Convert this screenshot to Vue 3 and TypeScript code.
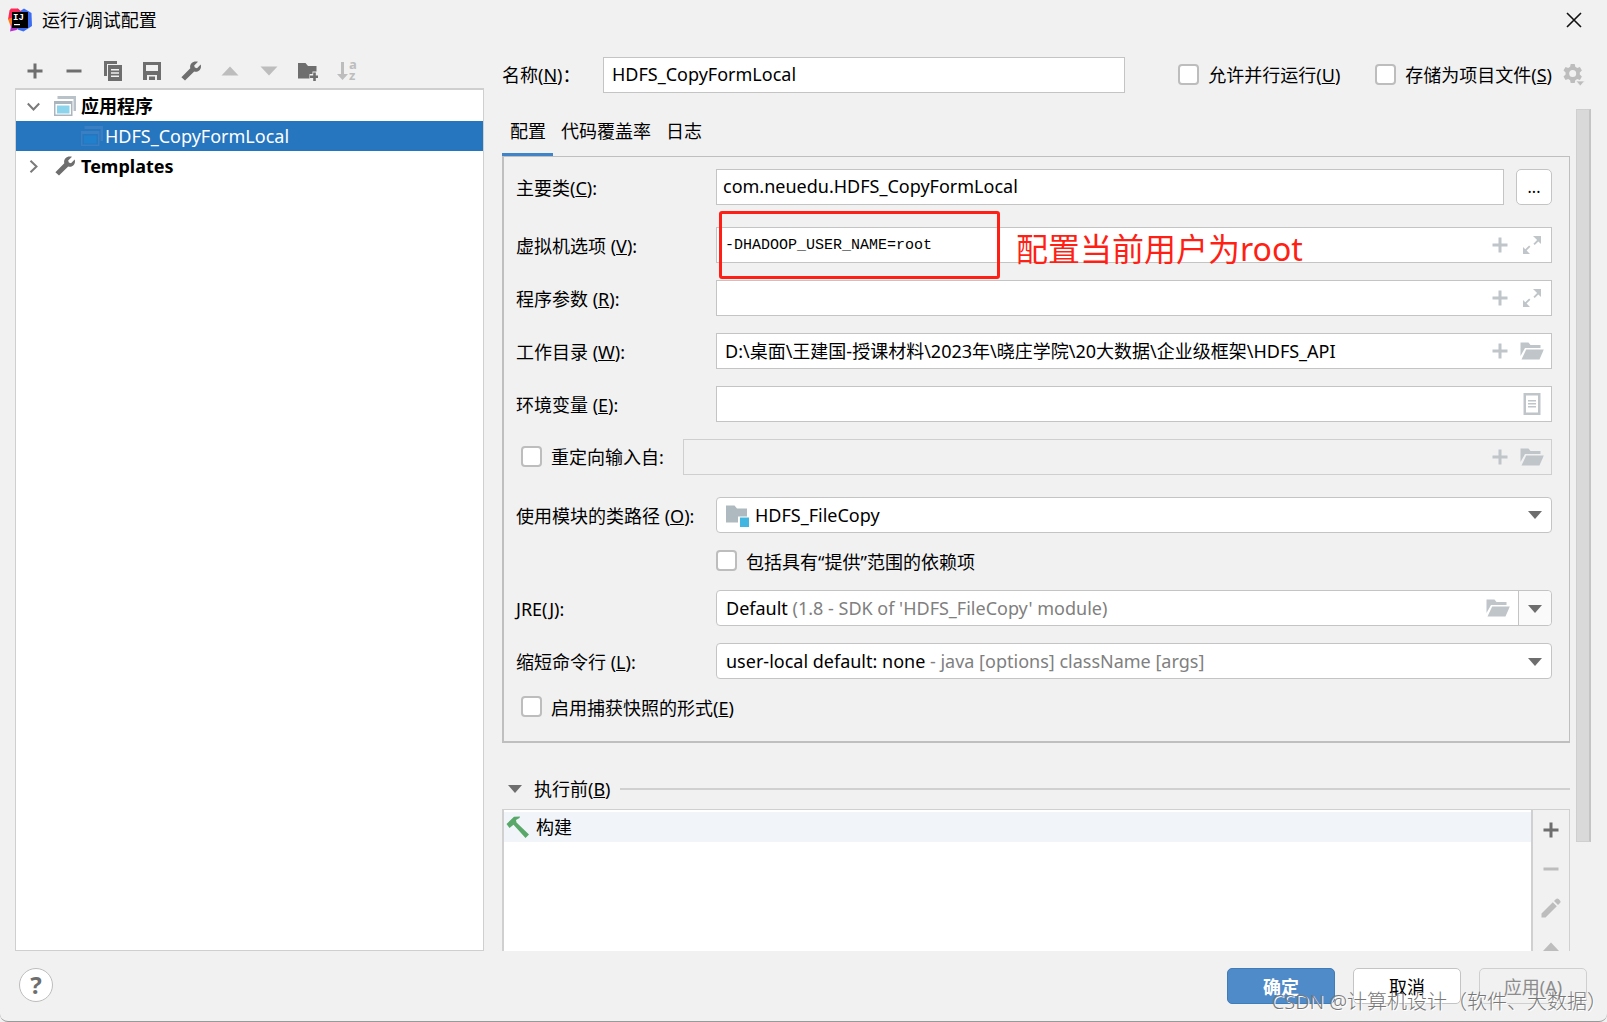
<script setup lang="ts">
import { ref } from 'vue'

interface Tool { icon: string; label: string; off?: boolean }

const tools: Tool[] = [
  { icon: 'plus', label: '添加' },
  { icon: 'minus', label: '移除' },
  { icon: 'copy', label: '复制' },
  { icon: 'save', label: '保存' },
  { icon: 'wrench', label: '编辑模板' },
  { icon: 'up', label: '上移', off: true },
  { icon: 'down', label: '下移', off: true },
  { icon: 'folder-add', label: '新建文件夹' },
]
const sideTools: Tool[] = [
  { icon: 'plus', label: '添加' },
  { icon: 'minus', label: '移除', off: true },
  { icon: 'pencil', label: '编辑', off: true },
  { icon: 'up', label: '上移', off: true },
]
const tabs = ['配置', '代码覆盖率', '日志']

const activeTab = ref(0)
const name = ref('HDFS_CopyFormLocal')
const mainClass = ref('com.neuedu.HDFS_CopyFormLocal')
const vmOptions = ref('-DHADOOP_USER_NAME=root')
const programArgs = ref('')
const workDir = ref('D:\\桌面\\王建国-授课材料\\2023年\\晓庄学院\\20大数据\\企业级框架\\HDFS_API')
const envVars = ref('')
</script>

<template>
  <svg class="defs" aria-hidden="true">
    <symbol id="i-plus" viewBox="0 0 20 20"><path d="M8.500 2.500h3v6h6v3h-6v6h-3v-6h-6v-3h6z" fill="currentColor" /></symbol>
    <symbol id="i-minus" viewBox="0 0 20 20"><path d="M2.500 8.500h15v3h-15z" fill="currentColor" /></symbol>
    <symbol id="i-copy" viewBox="0 0 20 20">
      <path d="M1 0h13v3H4v12H1z" fill="currentColor" />
      <path d="M5 4h14v16H5zM8 8v1.500h8V8zM8 11.300v1.500h8v-1.500zM8 14.600v1.500h8v-1.500z" fill="currentColor" fill-rule="evenodd" />
    </symbol>
    <symbol id="i-save" viewBox="0 0 20 20"><path d="M1 1h18v18H1zM4 4v6h12V4zM5 14v5h2v-3.500h6V19h2v-5z" fill="currentColor" fill-rule="evenodd" /></symbol>
    <symbol id="i-wrench" viewBox="0 0 20 20"><path d="M17 .8l-3.800 3.700.6 2 2.200.7 3.700-3.600c.7 2.300 0 4.500-1.500 5.800-1.400 1.300-3.300 1.600-5 1.100L4 19.600.4 16.300 9.300 7.200c-.5-1.700-.1-3.700 1.200-5C12 .6 14.600-.1 17 .8z" fill="currentColor" /></symbol>
    <symbol id="i-up" viewBox="0 0 20 20"><path d="M10 5.500l8.500 9h-17z" fill="currentColor" /></symbol>
    <symbol id="i-down" viewBox="0 0 20 20"><path d="M10 14.500l8.500-9h-17z" fill="currentColor" /></symbol>
    <symbol id="i-folder-add" viewBox="0 0 20 20">
      <path d="M0 2h7.500l2.500 3h8.500v5.500h-4v2.500h-3v4.500H0z" fill="currentColor" />
      <path d="M15.200 11.500h2.600v3H21v2.600h-3.200v3h-2.600v-3H12v-2.600h3.200z" fill="currentColor" />
    </symbol>
    <symbol id="i-pencil" viewBox="0 0 20 20"><path d="M.5 15.500L11.800 4.200l4 4L4.500 19.500h-4zM13 3l2-2c.8-.8 1.800-.8 2.600 0l1.400 1.400c.8.800.8 1.800 0 2.600l-2 2z" fill="currentColor" /></symbol>
    <symbol id="i-app" viewBox="0 0 22 20">
      <path d="M3.500 0H22v15h-2.500V3h-16z" fill="#b9c2c9" />
      <path d="M0 5h18.500v15H0z" fill="#aab5bd" />
      <path d="M1.500 8H17V18.500H1.500z" fill="#fff" />
      <path d="M3 9.500h12.500v8H3z" fill="#8cd3ec" />
    </symbol>
    <symbol id="i-app-on" viewBox="0 0 22 20">
      <path d="M3.500 0H22v15h-2.500V3h-16z" fill="#3a7fc1" />
      <path d="M0 5h18.500v15H0z" fill="#3a7fc1" />
      <path d="M1.500 8H17V18.500H1.500z" fill="#2675bf" />
      <path d="M3 9.500h12.500v8H3z" fill="#2080cb" />
    </symbol>
    <symbol id="i-expand" viewBox="0 0 20 20">
      <path d="M11 1h8v8l-2.600-2.600-3.700 3.600-1.300-1.300 3.700-3.600zM1 19v-7l2.300 2.300 3.800-3.800 1.300 1.300-3.800 3.800L8 19z" fill="currentColor" />
    </symbol>
    <symbol id="i-folder" viewBox="0 0 24 20">
      <path d="M.5 1.500h8l2 2.500h10v3H5L.5 15z" fill="currentColor" />
      <path d="M6.200 8.500H23.800L19.500 18.500H1.500z" fill="currentColor" />
    </symbol>
    <symbol id="i-doc" viewBox="0 0 18 22">
      <path d="M.5 0h17v22H.5zM3 2.500v17h12v-17zM5 7h8v1.400H5zM5 10h8v1.400H5zM5 13h8v1.400H5z" fill="currentColor" fill-rule="evenodd" />
    </symbol>
    <symbol id="i-gear" viewBox="0 0 22 22">
      <path d="M7.700 0h4l.6 2.800 1.900 1.100 2.700-.9 2 3.500-2.100 1.900v2.200l2.100 1.900-2 3.500-2.700-.9-1.900 1.100-.6 2.800h-4l-.6-2.800-1.900-1.100-2.700.9-2-3.500 2.100-1.900V8.400L.5 6.500l2-3.500 2.700.9 1.900-1.100zM9.700 6a3.500 3.500 0 1 0 0 7 3.500 3.500 0 0 0 0-7z" fill="currentColor" fill-rule="evenodd" />
      <path d="M13 17h8.500l-4.200 5z" fill="currentColor" stroke="#f1f1f1" stroke-width=".7" />
    </symbol>
    <symbol id="i-arrow" viewBox="0 0 14 8"><path d="M0 0h14L7 8z" fill="currentColor" /></symbol>
  </svg>

  <main class="window">
    <header class="titlebar">
      <svg class="logo" viewBox="0 0 24 24" aria-hidden="true">
        <path d="M1.500 2.500L3 .5h7l4 4-2 8-12-1z" fill="#fe2857" />
        <path d="M0 11l6-2 4 8-7 2.500z" fill="#fc801d" />
        <path d="M2 23.500l1.500-8 9 2-4 4.500z" fill="#b232c8" />
        <path d="M16 .5l7.500 4.500L24 18l-8.500 5.500-6-2 2-18z" fill="#3c6df0" />
        <path d="M9 .5l3 2 4 3-6 2z" fill="#e0306e" />
        <rect x="4" y="4" width="16" height="16" />
        <text x="5" y="12" class="logo-text">IJ</text>
        <path d="M6 16h6v1.200H6z" fill="#fff" />
      </svg>
      <h1>运行/调试配置</h1>
      <button class="plain close" aria-label="关闭">
        <svg width="16" height="16" viewBox="0 0 16 16"><path d="M1 1l14 14M15 1L1 15" stroke="#111" stroke-width="1.600" /></svg>
      </button>
    </header>

    <div class="body">
      <aside class="left">
        <div class="toolbar">
          <button v-for="t in tools" :key="t.icon" class="plain tool" :class="{ off: t.off }" :aria-label="t.label">
            <svg class="i20"><use :href="'#i-' + t.icon" /></svg>
          </button>
          <button class="plain tool off" aria-label="排序">
            <svg class="i20" viewBox="0 0 20 20">
              <path d="M4 1h3v12h4l-5.500 6L0 13h4z" fill="currentColor" />
              <text x="12" y="8" class="glyph">a</text>
              <text x="12" y="19" class="glyph">z</text>
            </svg>
          </button>
        </div>
        <ul class="tree">
          <li class="node">
            <svg class="chev" viewBox="0 0 13 13"><path d="M.8 3.500l5.700 6 5.700-6" /></svg>
            <svg class="kind"><use href="#i-app" /></svg>
            <b>应用程序</b>
          </li>
          <li class="node child">
            <svg class="kind"><use href="#i-app-on" /></svg>
            <span>HDFS_CopyFormLocal</span>
          </li>
          <li class="node">
            <svg class="chev" viewBox="0 0 13 13"><path d="M3.500.8l6 5.700-6 5.700" /></svg>
            <svg class="kind dark"><use href="#i-wrench" /></svg>
            <b>Templates</b>
          </li>
        </ul>
      </aside>

      <section class="right">
        <div class="head">
          <label for="name" class="name-label">名称(<u>N</u>)：</label>
          <input id="name" v-model="name" type="text" class="box name" />
          <label class="check"><input type="checkbox" />允许并行运行(<u>U</u>)</label>
          <label class="check second"><input type="checkbox" />存储为项目文件(<u>S</u>)</label>
          <button class="plain gear" aria-label="设置"><svg width="22" height="22"><use href="#i-gear" /></svg></button>
        </div>

        <div class="viewport">
          <div class="content">
            <nav class="tabs">
              <button v-for="(t, i) in tabs" :key="t" class="plain tab" :class="{ on: i === activeTab }" @click="activeTab = i">{{ t }}</button>
            </nav>

            <div class="panel">
              <div class="group">
                <div class="row">
                  <label for="main" class="lab">主要类(<u>C</u>):</label>
                  <input id="main" v-model="mainClass" type="text" class="box fill" />
                  <button class="more">...</button>
                </div>
              </div>

              <div class="group">
                <div class="row">
                  <label for="vm" class="lab">虚拟机选项 (<u>V</u>):</label>
                  <div class="field">
                    <input id="vm" v-model="vmOptions" type="text" class="box mono" />
                    <span class="acts">
                      <svg class="i20"><use href="#i-plus" /></svg>
                      <svg class="act"><use href="#i-expand" /></svg>
                    </span>
                    <span class="frame"></span>
                    <span class="note">配置当前用户为root</span>
                  </div>
                </div>
                <div class="row">
                  <label for="args" class="lab">程序参数 (<u>R</u>):</label>
                  <div class="field">
                    <input id="args" v-model="programArgs" type="text" class="box" />
                    <span class="acts">
                      <svg class="i20"><use href="#i-plus" /></svg>
                      <svg class="act"><use href="#i-expand" /></svg>
                    </span>
                  </div>
                </div>
                <div class="row">
                  <label for="dir" class="lab">工作目录 (<u>W</u>):</label>
                  <div class="field">
                    <input id="dir" v-model="workDir" type="text" class="box" />
                    <span class="acts">
                      <svg class="i20"><use href="#i-plus" /></svg>
                      <svg class="act"><use href="#i-folder" /></svg>
                    </span>
                  </div>
                </div>
                <div class="row">
                  <label for="env" class="lab">环境变量 (<u>E</u>):</label>
                  <div class="field">
                    <input id="env" v-model="envVars" type="text" class="box" />
                    <span class="acts"><svg class="act doc"><use href="#i-doc" /></svg></span>
                  </div>
                </div>
                <div class="row">
                  <label class="check redirect"><input type="checkbox" />重定向输入自:</label>
                  <div class="field">
                    <input type="text" class="box" disabled aria-label="重定向输入自" />
                    <span class="acts">
                      <svg class="i20"><use href="#i-plus" /></svg>
                      <svg class="act"><use href="#i-folder" /></svg>
                    </span>
                  </div>
                </div>
              </div>

              <div class="group">
                <div class="row">
                  <label for="module" class="lab">使用模块的类路径 (<u>O</u>):</label>
                  <div class="field">
                    <select id="module" class="box combo module"><option>HDFS_FileCopy</option></select>
                    <svg class="module-icon" viewBox="0 0 23 22">
                      <path d="M0 .5h8.500l2.500 3h10v8h-9v6H0z" fill="#afb9c0" />
                      <path d="M14 12.500h9V22h-9z" fill="#40b6e0" />
                    </svg>
                    <svg class="drop"><use href="#i-arrow" /></svg>
                  </div>
                </div>
                <label class="check provided"><input type="checkbox" />包括具有“提供”范围的依赖项</label>
                <div class="row">
                  <label for="jre" class="lab">JRE(<u>J</u>):</label>
                  <div class="field combo-view">
                    <span>Default <i>(1.8 - SDK of 'HDFS_FileCopy' module)</i></span>
                    <svg class="act jre-folder"><use href="#i-folder" /></svg>
                    <span class="split"></span>
                    <svg class="drop"><use href="#i-arrow" /></svg>
                    <select id="jre" class="cover"><option value="default" label="Default"></option></select>
                  </div>
                </div>
                <div class="row">
                  <label for="short" class="lab">缩短命令行 (<u>L</u>):</label>
                  <div class="field combo-view">
                    <span>user-local default: none <i>- java [options] className [args]</i></span>
                    <svg class="drop"><use href="#i-arrow" /></svg>
                    <select id="short" class="cover"><option value="none" label="none"></option></select>
                  </div>
                </div>
                <label class="check inner"><input type="checkbox" />启用捕获快照的形式(<u>E</u>)</label>
              </div>
            </div>

            <div class="before">
              <svg class="fold"><use href="#i-arrow" /></svg>
              <h2>执行前(<u>B</u>)</h2>
              <span class="rule"></span>
            </div>
            <div class="tasks">
              <ul class="list">
                <li>
                  <svg width="24" height="22" viewBox="0 0 24 22"><path d="M.5 8L8 .8 14 .5l-.5 1.500-3.500 2 .5 2.500L23 18.500 19.500 22 7.500 8.800 3.500 12z" fill="#59a869" /></svg>
                  <span>构建</span>
                </li>
              </ul>
              <div class="side">
                <button v-for="t in sideTools" :key="t.icon" class="plain side-tool" :class="{ off: t.off }" :aria-label="t.label">
                  <svg class="i20"><use :href="'#i-' + t.icon" /></svg>
                </button>
              </div>
            </div>
          </div>
          <div class="track"><div class="thumb"></div></div>
        </div>
      </section>
    </div>

    <footer class="footer">
      <button class="help" aria-label="帮助">?</button>
      <button class="btn primary">确定</button>
      <button class="btn">取消</button>
      <button class="btn" disabled>应用(A)</button>
      <span class="watermark">CSDN @计算机设计（软件、大数据）</span>
    </footer>
  </main>
</template>

<style>
body {
  margin: 0;
  background: #f1f1f1;
}
</style>

<style scoped>
* {
  box-sizing: border-box;
}
.defs {
  position: absolute;
  width: 0;
  height: 0;
}
.window,
button,
input,
select {
  font-family: "Noto Sans", "Noto Sans CJK SC", sans-serif;
  font-size: 18px;
  line-height: 24px;
  color: #000;
}
.window {
  display: flex;
  flex-direction: column;
  height: 100vh;
  background: #f1f1f1;
  border-bottom: 1px solid #999;
  border-radius: 0 0 8px 8px;
  overflow: hidden;
}
button,
input,
select {
  margin: 0;
}
.plain {
  padding: 0;
  border: 0;
  background: none;
}
h1,
h2 {
  margin: 0;
  font-size: 18px;
  font-weight: 400;
}
ul {
  margin: 0;
  padding: 0;
  list-style: none;
}
svg {
  flex: none;
}
.glyph {
  font: bold 13px "Open Sans", sans-serif;
  fill: currentColor;
}
.logo-text {
  font: bold 9px "Liberation Mono", monospace;
  fill: #fff;
}
.i20 {
  width: 20px;
  height: 20px;
  overflow: visible;
}

.titlebar {
  display: flex;
  align-items: center;
  height: 40px;
  padding: 0 25px 0 8px;
  gap: 10px;
}
.logo {
  width: 24px;
  height: 24px;
}
.close {
  display: flex;
  margin-left: auto;
}

.body {
  display: flex;
  flex: 1;
  min-height: 0;
  gap: 18px;
  padding-left: 15px;
}
.left {
  display: flex;
  flex: none;
  flex-direction: column;
  width: 469px;
  padding-top: 14px;
}
.toolbar {
  display: flex;
  flex: none;
  height: 34px;
}
.tool,
.side-tool {
  display: flex;
  align-items: center;
  justify-content: center;
  color: #6e6e6e;
}
.tool {
  width: 39px;
}
.tool.off,
.side-tool.off {
  color: #bdbdbd;
}
.tree {
  flex: 1;
  padding-top: 1px;
  border: 1px solid #cfcfcf;
  border-top-width: 2px;
  background: #fff;
}
.node {
  display: flex;
  align-items: center;
  height: 30px;
  padding-left: 11px;
}
.chev {
  width: 13px;
  height: 13px;
  margin-right: 14px;
  fill: none;
  stroke: #7a7a7a;
  stroke-width: 2;
}
.kind {
  width: 22px;
  height: 20px;
  margin-right: 5px;
}
.dark {
  color: #6e6e6e;
}
.child {
  padding-left: 65px;
  background: #2675bf;
  color: #fff;
}
.child .kind {
  margin-right: 2px;
}

.right {
  display: flex;
  flex: 1;
  flex-direction: column;
  min-width: 0;
  padding-top: 17px;
}
.head {
  display: flex;
  flex: none;
  align-items: center;
  height: 36px;
  margin-bottom: 16px;
  padding-right: 22px;
}
.name-label {
  width: 101px;
}
.box {
  height: 36px;
  padding: 0 8px 2px;
  border: 1px solid #c4c4c4;
  border-radius: 0;
  background: #fff;
  outline: 0;
}
.name,
.fill {
  flex: 1;
  min-width: 0;
}
.fill {
  padding-left: 6px;
}
.name {
  margin-right: 53px;
}
.check {
  display: flex;
  align-items: center;
}
.check input {
  appearance: none;
  width: 21px;
  height: 21px;
  margin: 0 9px 2px 0;
  border: 2px solid #bdbdbd;
  border-radius: 4px;
  background: #fff;
}
.check input:checked {
  background: #4f8ac9;
}
.second {
  margin-left: 35px;
}
.gear {
  display: flex;
  margin-left: 11px;
  color: #bdbdbd;
}

.viewport {
  display: flex;
  flex: 1;
  min-height: 0;
  overflow: hidden;
}
.content {
  display: flex;
  flex: 1;
  flex-direction: column;
  min-width: 0;
}
.track {
  flex: none;
  width: 15px;
  margin: 0 16px 0 6px;
}
.thumb {
  height: 87%;
  border: 1px solid #cfcfcf;
  border-right: 2px solid #c4c4c4;
  background: #d9d9d9;
}
.tabs {
  display: flex;
  flex: none;
}
.tab {
  padding: 10px 7px 10px 8px;
  border-bottom: 4px solid transparent;
}
.tab.on {
  border-bottom-color: #4083c9;
}
.panel {
  flex: none;
  margin-top: -1px;
  padding: 12px 17px 22px 12px;
  border: 2px solid #bfbfbf;
  border-width: 1px 1px 2px 2px;
}
.group {
  display: flex;
  flex-direction: column;
  gap: 17px;
}
.group + .group {
  margin-top: 22px;
}
.row {
  display: flex;
  align-items: center;
  height: 36px;
}
.lab {
  flex: none;
  width: 200px;
  padding-top: 2px;
}
.more {
  width: 36px;
  height: 36px;
  margin-left: 12px;
  padding: 0;
  border: 1px solid #c4c4c4;
  border-radius: 5px;
  background: #fff;
  font-size: 16px;
}
.field {
  position: relative;
  flex: 1;
  min-width: 0;
}
.field .box {
  display: block;
  width: 100%;
}
.field .mono {
  padding-bottom: 0;
  font-family: "Liberation Mono", monospace;
  font-size: 15px;
}
.field .box:disabled {
  border-color: #cfcfcf;
  background: #f1f1f1;
}
.acts {
  position: absolute;
  top: 0;
  right: 8px;
  display: flex;
  align-items: center;
  gap: 10px;
  height: 36px;
  color: #c0c5c9;
}
.act {
  width: 24px;
  height: 20px;
}
.doc {
  height: 22px;
}
.frame {
  position: absolute;
  top: -16px;
  left: 3px;
  width: 281px;
  height: 68px;
  border: 3px solid #ff1f14;
  border-radius: 3px;
}
.note {
  position: absolute;
  top: 2px;
  left: 300px;
  font-size: 32px;
  line-height: 40px;
  color: #ff1f14;
  white-space: nowrap;
}
.redirect,
.inner {
  padding-left: 5px;
}
.redirect {
  flex: none;
  width: 167px;
}
.check.provided,
.check.inner {
  height: 23px;
}
.provided {
  padding-left: 200px;
}
.combo {
  appearance: none;
  border-radius: 4px;
}
.field .module {
  padding: 0 0 0 38px;
}
.module-icon {
  position: absolute;
  top: 8px;
  left: 10px;
  width: 23px;
  height: 22px;
  pointer-events: none;
}
.drop {
  position: absolute;
  top: 14px;
  right: 10px;
  width: 14px;
  height: 8px;
  color: #6e6e6e;
  pointer-events: none;
}
.combo-view {
  display: flex;
  align-items: center;
  height: 36px;
  padding-left: 9px;
  border: 1px solid #c4c4c4;
  border-radius: 4px;
  background: #fff;
}
.combo-view .drop {
  right: 9px;
}
.combo-view i {
  font-style: normal;
  color: #808080;
}
.jre-folder {
  margin-left: auto;
  margin-right: 8px;
  color: #c0c5c9;
}
.split {
  align-self: stretch;
  width: 33px;
  border-left: 1px solid #c4c4c4;
  border-radius: 0 4px 4px 0;
  background: #fafafa;
}
.cover {
  position: absolute;
  inset: 0;
  width: 100%;
  opacity: 0;
}

.before {
  display: flex;
  flex: none;
  align-items: center;
  gap: 9px;
  margin: 34px 0 8px;
  padding-left: 6px;
}
.fold {
  width: 14px;
  height: 8px;
  margin-right: 3px;
  color: #6e6e6e;
}
.rule {
  flex: 1;
  height: 2px;
  background: #d0d0d0;
}
.tasks {
  display: flex;
  flex: 1;
  min-height: 0;
  border: 1px solid #d0d0d0;
  border-width: 1px 1px 0 2px;
}
.list {
  flex: 1;
  padding-top: 2px;
  background: #fff;
}
.list li {
  display: flex;
  align-items: center;
  gap: 6px;
  height: 30px;
  padding-left: 2px;
  background: #f1f5fa;
}
.side {
  display: flex;
  flex-direction: column;
  width: 38px;
  border-left: 2px solid #d0d0d0;
  overflow: hidden;
}
.side-tool {
  flex: none;
  height: 39px;
}

.footer {
  position: relative;
  display: flex;
  flex: none;
  gap: 18px;
  padding: 17px 20px 17px 19px;
}
.help {
  width: 34px;
  height: 34px;
  margin: 0 auto 0 0;
  padding: 0;
  border: 1px solid #bdbdbd;
  border-radius: 50%;
  background: #fff;
  color: #6e6e6e;
  font-size: 24px;
  font-weight: 700;
}
.btn {
  width: 108px;
  height: 36px;
  padding: 2px 0 0;
  border: 1px solid #c4c4c4;
  border-radius: 5px;
  background: #fff;
}
.primary {
  border-color: #3f7cba;
  background: #4f8ac9;
  color: #fff;
  font-weight: 700;
}
.btn:disabled {
  border-color: #cfcfcf;
  background: #f1f1f1;
  color: #8c8c8c;
}
.watermark {
  position: absolute;
  right: 0;
  bottom: 7px;
  font-size: 20px;
  font-weight: 300;
  color: #777;
  text-shadow: 1px 1px 0 #fff;
  white-space: nowrap;
  pointer-events: none;
}
</style>
